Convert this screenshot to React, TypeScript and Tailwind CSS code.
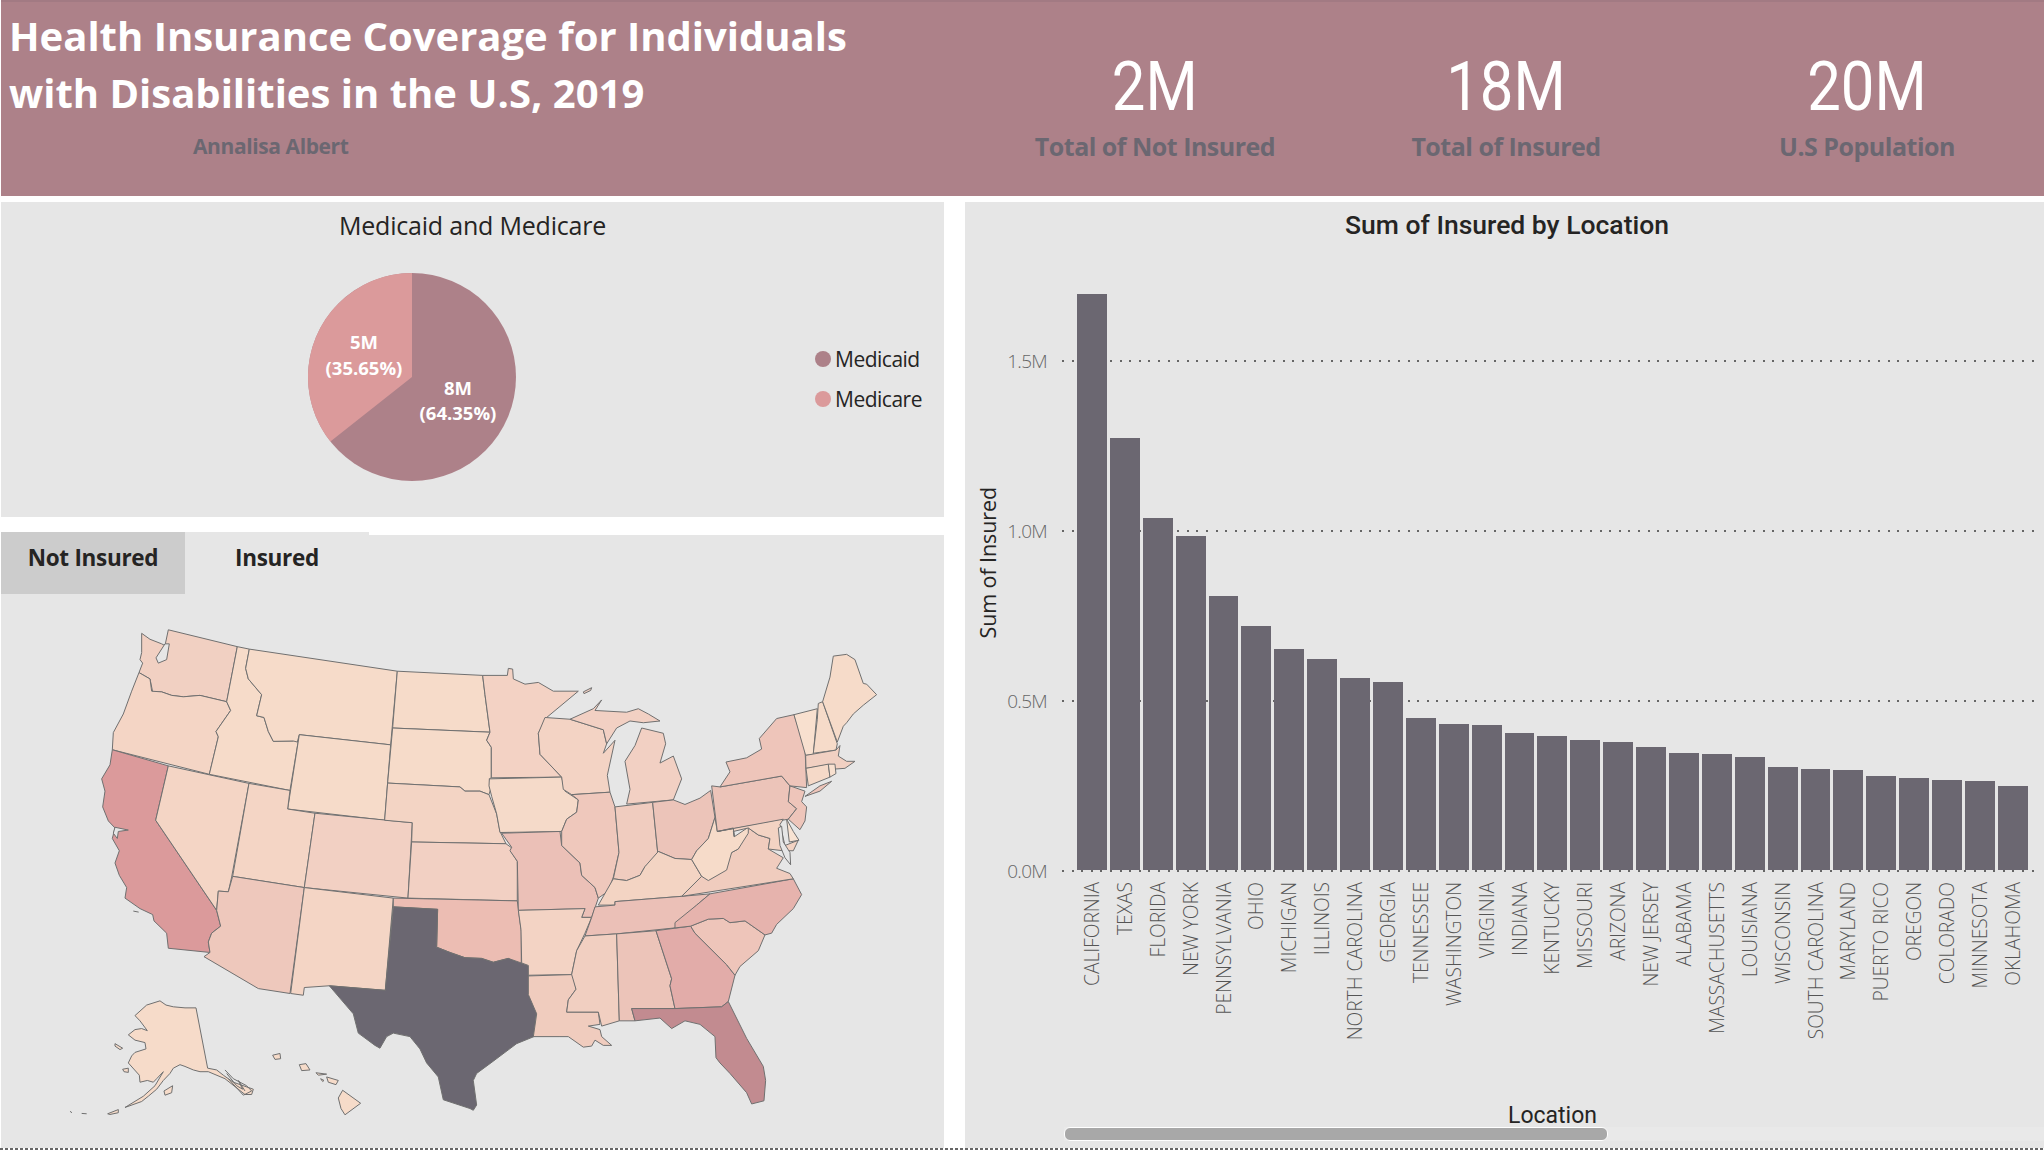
const sans = 'font-["Open_Sans",sans-serif]';

// sum of insured, bar heights read off the chart
const locations: [string, number][] = [
  ['CALIFORNIA', 576], ['TEXAS', 432], ['FLORIDA', 352], ['NEW YORK', 334], ['PENNSYLVANIA', 274],
  ['OHIO', 244], ['MICHIGAN', 221], ['ILLINOIS', 211], ['NORTH CAROLINA', 192], ['GEORGIA', 188],
  ['TENNESSEE', 152], ['WASHINGTON', 146], ['VIRGINIA', 145], ['INDIANA', 137], ['KENTUCKY', 134],
  ['MISSOURI', 130], ['ARIZONA', 128], ['NEW JERSEY', 123], ['ALABAMA', 117], ['MASSACHUSETTS', 116],
  ['LOUISIANA', 113], ['WISCONSIN', 103], ['SOUTH CAROLINA', 101], ['MARYLAND', 100], ['PUERTO RICO', 94],
  ['OREGON', 92], ['COLORADO', 90], ['MINNESOTA', 89], ['OKLAHOMA', 84],
];

const westStates: [string, string][] = [
  ['#f1d0c2', '245,95 270,112 305,125 315,130 325,85 532,133 500,290 420,272 370,276 335,272 305,262 278,262 270,225 237,207 248,180 240,170 245,150'],
  ['#f4d5c5', '237,207 270,225 275,260 305,262 335,272 370,276 420,272 500,290 512,315 468,375 475,390 448,497 157,427 160,378 190,325 215,260'],
  ['#db9a9b', '157,427 325,473 287,628 470,885 482,930 455,950 445,975 450,1005 325,993 320,950 282,915 278,897 240,880 195,850 200,820 178,785 165,750 178,715 157,680 165,650 145,630 128,590 135,545 125,510 150,470'],
  ['#f4d5c5', '325,473 567,523 515,790 505,832 475,830 470,885 287,628'],
  ['#f6dbc9', '532,133 568,140 557,195 565,225 605,270 590,330 612,335 625,375 640,403 700,402 712,395 718,384 690,543 448,497 475,390 468,375 512,315 500,290'],
  ['#f6dbc9', '568,140 1012,203 992,413 718,384 712,405 700,402 640,403 625,375 612,335 590,330 605,270 565,225 557,195'],
  ['#f6dbc9', '718,384 992,413 974,628 683,596'],
  ['#f4d5c5', '567,523 690,543 683,596 765,608 733,820 518,788'],
  ['#f2d0c3', '765,608 1057,635 1044,850 733,820'],
  ['#eec8bc', '518,788 733,820 690,1122 595,1108 432,1017 450,1005 445,975 455,950 482,930 470,885 475,830 505,832'],
  ['#f4d5c5', '733,820 1000,850 976,1113 808,1100 733,1105 730,1127 692,1122'],
  ['#f6dbc9', '1012,203 1268,215 1275,270 1290,377 998,365'],
  ['#f6dbc9', '998,365 1290,377 1280,400 1294,420 1294,507 1288,510 1295,530 1287,555 1260,545 1230,545 1215,545 1200,533 983,522'],
  ['#f3d4c4', '983,522 1200,533 1215,545 1260,545 1287,555 1310,610 1320,660 1338,695 1055,690 1057,635 974,628'],
  ['#f2d0c3', '1055,690 1338,695 1360,710 1355,720 1372,745 1372,858 1044,850'],
  ['#ecbdb3', '1000,850 1372,858 1384,945 1384,1040 1345,1022 1300,1033 1265,1022 1215,1020 1170,1005 1130,990 1133,882 1000,875'],
  ['#6b6771', '1000,875 1133,882 1130,990 1170,1005 1215,1020 1265,1022 1300,1033 1345,1022 1405,1042 1407,1125 1430,1170 1422,1245 1370,1265 1300,1315 1250,1350 1240,1370 1250,1440 1240,1455 1230,1450 1150,1425 1135,1360 1100,1320 1080,1280 1050,1245 1000,1235 980,1245 960,1278 945,1270 895,1235 880,1180 808,1100 976,1113'],
  // alaska and hawaii
  ['#f6dbc9', '300,1143 318,1155 340,1160 375,1163 408,1163 443,1335 470,1340 490,1355 520,1375 580,1395 575,1410 555,1410 495,1365 445,1345 420,1345 400,1340 375,1330 360,1325 340,1335 330,1350 310,1370 290,1395 265,1415 245,1430 195,1447 250,1415 285,1385 310,1345 290,1365 280,1375 262,1370 240,1375 238,1355 205,1320 215,1300 225,1290 258,1280 255,1262 225,1255 205,1240 225,1225 245,1222 262,1228 240,1200 225,1185 260,1155'],
  ['#f6dbc9', '312,1400 338,1385 335,1405 315,1412'],
  ['#f6dbc9', '188,1338 205,1335 205,1347 192,1345'],
  ['#f6dbc9', '165,1265 188,1278 180,1282 165,1272'],
  ['#f6dbc9', '143,1465 175,1453 175,1462 150,1467'],
  ['#f6dbc9', '638,1298 660,1293 662,1308 645,1310'],
  ['#f6dbc9', '718,1325 738,1322 750,1340 725,1342'],
  ['#f6dbc9', '768,1348 800,1352 775,1355'],
  ['#f6dbc9', '800,1360 835,1370 828,1382 805,1375'],
  ['#f6dbc9', '782,1365 792,1370 788,1373'],
  ['#f6dbc9', '848,1398 902,1435 855,1468 843,1450 835,1420'],
];

const eastStates: [string, string][] = [
  ['#f3d2c4', '-52,215 22,215 25,195 38,197 40,225 75,240 115,235 160,260 235,260 140,335 115,380 120,440 185,505 -26,507 -26,420 -40,400 -30,377 -45,270'],
  ['#f5dac9', '-32,510 185,505 195,545 235,570 230,605 200,625 185,660 0,663 -10,610 -25,560 -33,530'],
  ['#ebc0b7', '5,665 180,660 185,700 240,750 245,785 285,820 295,850 285,878 275,905 245,905 255,880 55,885 52,745 30,715 35,705'],
  ['#f3d3c4', '55,885 255,880 245,905 275,905 255,950 230,1000 215,1068 85,1070 85,1042 65,1035 63,940'],
  ['#f0ccbe', '85,1072 220,1068 228,1110 205,1140 200,1175 295,1175 300,1210 265,1215 300,1225 305,1245 335,1270 310,1270 285,1255 275,1272 250,1275 205,1245 180,1245 100,1245 110,1180 85,1125'],
  ['#f3d3c4', '135,335 210,340 310,370 320,410 310,437 345,400 322,500 330,548 215,555 190,540 185,505 120,440 115,380'],
  ['#f2d0c3', '210,340 280,310 305,285 285,315 380,320 415,310 445,325 480,345 430,350 390,345 350,365 320,410 310,370'],
  ['#f2d0c3', '380,582 390,540 375,460 405,415 425,365 490,380 497,410 480,465 520,445 545,510 520,570'],
  ['#efc8bc', '215,555 330,548 345,590 357,720 340,790 325,830 295,850 285,820 245,785 240,750 185,700 185,660 200,625 230,605 235,570'],
  ['#f0ccbf', '345,590 458,577 475,737 435,760 420,785 380,800 340,795 357,720'],
  ['#ecc4b9', '458,577 520,570 555,583 600,565 632,543 645,620 625,680 590,715 575,740 525,737 475,717 475,737'],
  ['#f3d4c3', '295,870 340,795 380,800 420,785 435,760 475,717 525,737 575,740 605,788 545,845 345,860 345,870'],
  ['#ebc0b7', '285,875 345,870 345,860 545,845 630,838 590,870 525,935 350,952 255,958 275,905'],
  ['#f1cfc1', '255,958 350,952 358,1200 305,1215 295,1175 200,1175 205,1140 228,1110 215,1068 230,1000'],
  ['#ecc4b9', '350,952 468,943 515,1080 510,1100 525,1165 395,1165 405,1200 375,1200 358,1200'],
  ['#e2aca9', '468,943 572,930 585,950 680,1040 705,1070 685,1145 665,1160 525,1165 510,1100 515,1080'],
  ['#c28b90', '395,1165 525,1165 665,1160 685,1145 740,1250 790,1330 797,1370 792,1428 755,1437 740,1405 690,1350 660,1320 648,1305 645,1245 600,1210 555,1200 515,1222 480,1192 405,1200'],
  ['#eec5ba', '572,930 625,910 670,908 690,920 735,915 795,955 775,1000 720,1045 705,1070 680,1040 585,950'],
  ['#e6b3ad', '525,935 525,920 590,870 630,838 880,795 905,840 880,880 830,925 815,950 795,955 735,915 690,920 670,908 625,910 572,930'],
  ['#f0ccbe', '545,845 605,788 640,790 695,720 715,710 745,650 775,670 810,680 805,710 850,735 830,765 870,780 880,795'],
  ['#f6dbc9', '575,740 590,715 625,680 645,620 652,660 700,650 703,675 745,648 745,665 715,710 695,720 680,770 625,800 605,788'],
  ['#ecc4b9', '635,530 660,533 845,502 870,530 865,575 890,595 865,625 652,660'],
  ['#f3d3c3', '652,660 850,625 840,640 855,700 895,685 880,715 850,715 805,710 810,680 775,670 745,650 700,660 703,675 700,650'],
  ['#f8e3d3', '860,625 880,660 897,685 868,690'],
  ['#eec5ba', '870,530 915,545 905,575 920,590 915,630 900,655 865,625 890,595 865,575'],
  ['#eec5ba', '660,533 690,490 678,462 740,450 785,425 778,395 830,338 882,327 915,420 920,535 870,530 845,502'],
  ['#f8e0cf', '882,327 952,310 940,440 917,443'],
  ['#f6dbc9', '955,295 968,290 1012,410 1008,428 940,437 952,340'],
  ['#f6dbc9', '968,290 990,220 1000,160 1040,155 1065,170 1090,238 1100,240 1130,270 1090,300 1060,325 1040,350 1030,360 1012,405'],
  ['#f1d0c2', '917,443 1008,428 1020,415 1015,445 1040,460 1065,460 1035,480 1005,482 988,470 918,480'],
  ['#f5d9c8', '918,480 985,468 990,505 925,530'],
  ['#f8e0cf', '985,468 1005,468 1008,495 990,505'],
  ['#eec5ba', '915,560 960,530 995,517 960,545'],
];

function UsMap() {
  return (
    <svg width="943" height="554" viewBox="1 594 943 554" className="block">
      <g transform="translate(60 600) scale(0.3333 0.3507)" stroke="#707070" strokeWidth="1">
        {westStates.map(([fill, pts], i) => (
          <polygon key={i} points={pts} fill={fill} strokeLinejoin="round" vectorEffect="non-scaling-stroke" />
        ))}
        {/* puget sound, sf bay */}
        <polygon points="288,165 315,125 328,125 320,170 295,180" fill="#e6e6e6" vectorEffect="non-scaling-stroke" />
        <polygon points="165,648 205,656 175,660 172,680 160,665" fill="#e6e6e6" vectorEffect="non-scaling-stroke" />
        <polyline points="495,1340 520,1365 560,1385 575,1400 550,1412 505,1365" fill="none" vectorEffect="non-scaling-stroke" />
        <polyline points="500,1350 530,1385 548,1395 535,1370 555,1400" fill="none" vectorEffect="non-scaling-stroke" />
        <polyline points="30,1458 36,1462" fill="none" vectorEffect="non-scaling-stroke" />
        <polyline points="65,1464 80,1465" fill="none" vectorEffect="non-scaling-stroke" />
        <polyline points="220,887 236,890" fill="none" vectorEffect="non-scaling-stroke" />
      </g>
      <g transform="translate(500 600) scale(0.3333 0.3507)" stroke="#707070" strokeWidth="1">
        {eastStates.map(([fill, pts], i) => (
          <polygon key={i} points={pts} fill={fill} strokeLinejoin="round" vectorEffect="non-scaling-stroke" />
        ))}
        {/* chesapeake */}
        <polygon points="835,650 845,645 850,690 870,720 872,755 855,735 840,700" fill="#e6e6e6" vectorEffect="non-scaling-stroke" />
        <polygon points="250,262 275,250 272,258 252,267" fill="#f2d0c3" vectorEffect="non-scaling-stroke" />
      </g>
    </svg>
  );
}

function Kpi({ value, label, className }: { value: string; label: string; className: string }) {
  return (
    <div className={`flex flex-col items-center ${className}`}>
      <div className='font-["Roboto",sans-serif] text-[68px] leading-[80px] text-white scale-x-[.88]'>{value}</div>
      <div className={`${sans} mt-[2px] text-[25px] leading-[34px] font-bold tracking-[-0.5px] text-[#6b6771]`}>{label}</div>
    </div>
  );
}

function YRow({ label }: { label: string }) {
  return (
    <div className="flex h-[170px] items-start">
      <div className={`${sans} -mt-[14px] w-[47px] text-right text-[19px] leading-[28px] tracking-[-0.7px] font-light text-[#666]`}>{label}</div>
      <div className="ml-[15px] mt-[-1px] h-[2px] flex-1 bg-[repeating-linear-gradient(90deg,#666_0,#666_2px,transparent_2px,transparent_9.6px)]" />
    </div>
  );
}

export default function App() {
  return (
    <div className={`${sans} flex h-[1150px] w-[2044px] flex-col overflow-hidden bg-white`}>
      <header className="ml-[1px] flex h-[196px] border-t-2 border-[#a27a83] bg-[#ad8189]">
        <div className="w-[979px]">
          <h1 className="pl-[8px] pt-[5px] text-[40px] leading-[57px] font-bold text-white">
            Health Insurance Coverage for Individuals
            <br />
            with Disabilities in the U.S, 2019
          </h1>
          <div className="mt-[9px] pl-[192px] text-[21px] leading-[32px] font-bold tracking-[-0.4px] text-[#6b6771]">Annalisa Albert</div>
        </div>
        <div className="flex pt-[45px]">
          <Kpi value="2M" label="Total of Not Insured" className="w-[350px]" />
          <Kpi value="18M" label="Total of Insured" className="w-[352px]" />
          <Kpi value="20M" label="U.S Population" className="ml-[8px] w-[354px]" />
        </div>
      </header>

      <div className="mt-[6px] flex h-[946px]">
        <div className="ml-[1px] w-[943px] shrink-0">
          <section className="h-[315px] bg-[#e6e6e6] text-center">
            <h2 className="pt-[6px] text-[25px] leading-[34px] tracking-[-0.2px] text-[#252423]">Medicaid and Medicare</h2>
            <div className="flex">
              <svg width="814" height="275" viewBox="1 242 814 275" className="block shrink-0">
                <circle cx="412" cy="377" r="104" fill="#ad8189" />
                <path d="M412 377 L412 273 A104 104 0 0 0 330.4 441.5 Z" fill="#db9a9b" />
                <g className="fill-white text-[18.5px] font-bold" textAnchor="middle">
                  <text x="364" y="349">5M</text>
                  <text x="364" y="375">(35.65%)</text>
                  <text x="458" y="395">8M</text>
                  <text x="458" y="420">(64.35%)</text>
                </g>
              </svg>
              <div className="flex flex-col gap-[12px] pt-[103px] text-[21px] leading-[28px] tracking-[-0.5px] text-[#252423]">
                <div className="flex items-center gap-[4px]"><span className="h-[16px] w-[16px] rounded-full bg-[#ad8189]" />Medicaid</div>
                <div className="flex items-center gap-[4px]"><span className="h-[16px] w-[16px] rounded-full bg-[#db9a9b]" />Medicare</div>
              </div>
            </div>
          </section>

          <div className="mt-[15px] flex h-[62px]">
            <div className="flex w-[184px] items-center justify-center bg-[#cccccc] pb-[10px] text-[22.5px] font-bold tracking-[-0.3px] text-[#252423]">Not Insured</div>
            <div className="flex w-[184px] items-center justify-center bg-[#e6e6e6] pb-[10px] text-[22.5px] font-bold tracking-[-0.3px] text-[#252423]">Insured</div>
            <div className="mt-[3px] flex-1 bg-[#e6e6e6]" />
          </div>
          <section className="h-[554px] bg-[#e6e6e6]">
            <UsMap />
          </section>
        </div>

        <section className="ml-[21px] w-[1079px] bg-[#e6e6e6]">
          <h2 className='pt-[6px] pl-[5px] text-center font-["Roboto",sans-serif] text-[26.5px] leading-[34px] font-medium text-[#252423]'>
            Sum of Insured by Location
          </h2>
          <div className="mt-[6px] flex h-[622px]">
            <div className="flex w-[46px] items-center justify-center pt-[8px]">
              <span className="rotate-180 text-[21.5px] leading-[26px] tracking-[-0.1px] text-[#252423] [writing-mode:vertical-rl]">Sum of Insured</span>
            </div>
            <div className="relative -ml-[11px] flex-1 pt-[113px] pr-[8px]">
              <YRow label="1.5M" />
              <YRow label="1.0M" />
              <YRow label="0.5M" />
              <YRow label="0.0M" />
              <div className="absolute left-[77px] bottom-0 flex items-end gap-[3px]">
                {locations.map(([name, h]) => (
                  <div key={name} className="w-[29.9px] bg-[#6b6771]" style={{ height: h }} />
                ))}
              </div>
            </div>
          </div>
          <div className="mt-[12px] ml-[112px] flex h-[220px] items-start gap-[3px]">
            {locations.map(([name]) => (
              <div key={name} className="flex w-[29.9px] justify-center">
                <span className="rotate-180 text-[19.2px] leading-[24px] font-light whitespace-nowrap text-[#555] [writing-mode:vertical-rl]">{name}</span>
              </div>
            ))}
          </div>
          <div className='ml-[543px] h-[28px] font-["Roboto",sans-serif] text-[23px] leading-[28px] text-[#252423]'>Location</div>
          <div className="-mt-[3px] ml-[99px] flex h-[14px] bg-[#e9e9e9]">
            <div className="h-full w-[544px] rounded-[6px] border border-white bg-[#a8a8a8]" />
          </div>
        </section>
      </div>
      <div className="h-[2px] bg-[repeating-linear-gradient(90deg,#666_0,#666_3px,transparent_3px,transparent_5px)]" />
    </div>
  );
}
